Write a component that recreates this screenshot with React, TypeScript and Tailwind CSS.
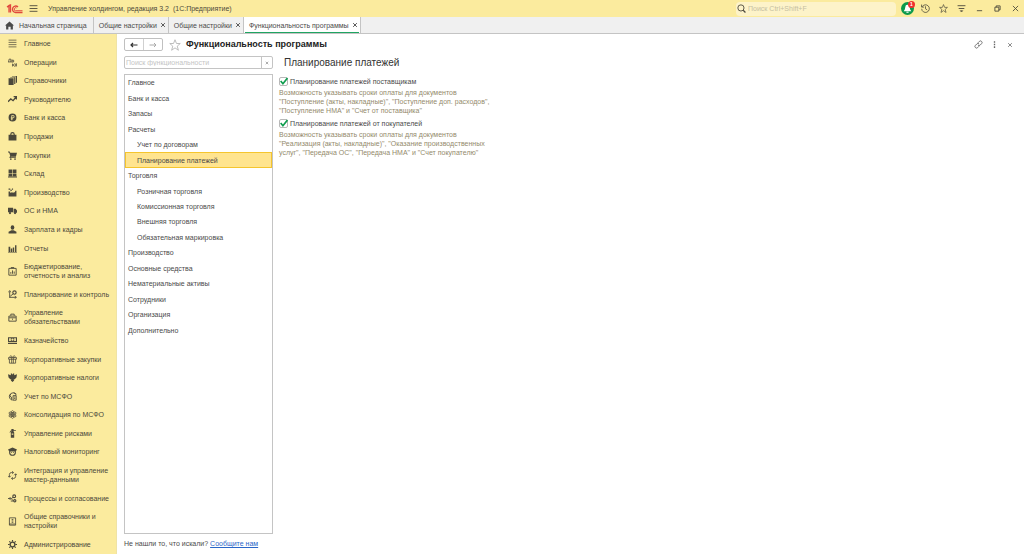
import { useState } from 'react';
import type { ReactNode } from 'react';

interface IconProps {
  className?: string;
  children: ReactNode;
}

// Solid glyph on a 16x16 grid
function Solid({ className = 'size-[9px]', children }: IconProps) {
  return (
    <svg viewBox="0 0 16 16" className={`${className} shrink-0`} fill="currentColor" aria-hidden="true">
      {children}
    </svg>
  );
}

// Outlined glyph on a 16x16 grid
function Line({ className = 'size-[9px]', children }: IconProps) {
  return (
    <svg
      viewBox="0 0 16 16"
      className={`${className} shrink-0`}
      fill="none"
      stroke="currentColor"
      strokeWidth="1.6"
      aria-hidden="true"
    >
      {children}
    </svg>
  );
}

const sections: { label: string; icon: ReactNode }[] = [
  { label: 'Главное', icon: <Line><path d="M1 2h14M1 6h14M1 10h14M1 14h14" strokeWidth="1.3" /></Line> },
  {
    label: 'Операции',
    icon: (
      <Line>
        <path d="M0 7h6M1 7l1-5h3v5M7 3v5M7 4h3v3H7M8 10v5M12 10l-3 2.5 3 2.5M13 15v-4l2-1v5" strokeWidth="1.4" />
      </Line>
    ),
  },
  {
    label: 'Справочники',
    icon: <Solid><path d="M1 4h9v12H1zM4 2h9v12h-2V3H4zM7 0h9v12h-2V1H7z" /></Solid>,
  },
  {
    label: 'Руководителю',
    icon: <Line><path d="M0 12l5-5 4 3 5-6M10 3h5v5" strokeWidth="2.2" /></Line>,
  },
  {
    label: 'Банк и касса',
    icon: (
      <Solid>
        <path fillRule="evenodd" d="M8 1a7 7 0 100 14A7 7 0 008 1zM6 4h3a2.500 2.500 0 010 5.200H7.500V10H9v1.300H7.500V13H6v-1.700H5V10h1V9.200H5V8h1zM7.500 5.300V8H9a1.300 1.300 0 000-2.700z" />
      </Solid>
    ),
  },
  {
    label: 'Продажи',
    icon: (
      <Solid>
        <path fillRule="evenodd" d="M1 5h3V4a4 4 0 018 0v1h3v10H1zM6 5h4V4a2 2 0 00-4 0z" />
      </Solid>
    ),
  },
  {
    label: 'Покупки',
    icon: (
      <Solid>
        <path d="M0 1h3l1 2h12l-2 7H5l-.5 1H14v1.500H3L2.500 11 4 9 2 2.500H0z" />
        <circle cx="5" cy="14.300" r="1.500" />
        <circle cx="12.500" cy="14.300" r="1.500" />
      </Solid>
    ),
  },
  {
    label: 'Склад',
    icon: <Solid><path d="M1 1h6.500v6H1zM8.500 1H15v6H8.500zM1 8h6.500v5H1zM8.500 8H15v5H8.500zM0 13.500h16V15H0z" /></Solid>,
  },
  {
    label: 'Производство',
    icon: <Solid><path d="M1 15V6h3v3l4-2v2l4-2v2l1-4h2v10zM1 1h3v2H1zM4 3h3v2H4zM7 1h2v2H7z" /></Solid>,
  },
  {
    label: 'ОС и НМА',
    icon: (
      <Solid>
        <path d="M0 3h9v8H0zM10 5h3.500L16 8v4h-6z" />
        <circle cx="3.500" cy="12.500" r="2" />
        <circle cx="12.500" cy="12.500" r="2" />
      </Solid>
    ),
  },
  {
    label: 'Зарплата и кадры',
    icon: (
      <Solid>
        <ellipse cx="8" cy="4.500" rx="3.200" ry="4" />
        <path d="M1 15v-3l5-2.500h4L15 12v3z" />
      </Solid>
    ),
  },
  {
    label: 'Отчеты',
    icon: <Solid><path d="M1 5h3v9H1zM5 8h2.500v6H5zM8.500 6H11v8H8.500zM12.500 2H15v12h-2.500zM0 14h16v1H0z" /></Solid>,
  },
  {
    label: 'Бюджетирование, отчетность и анализ',
    icon: <Line><path d="M1.500 2.500h13v12h-13zM5 1h6M5 12V9M8 12V6M11 12V8" /></Line>,
  },
  {
    label: 'Планирование и контроль',
    icon: (
      <Line>
        <path d="M3 14V3M1 4l2-3 2 3M3 13h11M12 11l3 2-3 2M4 11l5-4" />
        <circle cx="11.500" cy="4.500" r="3" strokeWidth="2" />
      </Line>
    ),
  },
  {
    label: 'Управление обязательствами',
    icon: <Line><path d="M1.500 5.500h13v9h-13zM5 5V2h6v3M2 8.500h12M8 10v2" /></Line>,
  },
  {
    label: 'Казначейство',
    icon: (
      <Solid>
        <path fillRule="evenodd" d="M0 2h16v9H0zM2 4v5h3V4zM11 4v5h3V4zM8 4.500a2 2 0 100 4 2 2 0 000-4zM0 12.500h16V14H0z" />
      </Solid>
    ),
  },
  {
    label: 'Корпоративные закупки',
    icon: <Line><path d="M1 4.500h14v3H1zM2.500 7.500v7h11v-7M6.500 4.500v10M9.500 4.500v10M8 4L5 1 3.500 3 5 4.500M8 4l3-3 1.500 2L11 4.500" strokeWidth="1.400" /></Line>,
  },
  {
    label: 'Корпоративные налоги',
    icon: <Solid><path d="M0 2l5 2V1h2l1 2 1-2h2v3l5-2-1 6-3 3-2 .5 1 2-3 2.500-3-2.500 1-2L4 11 1 8z" /></Solid>,
  },
  {
    label: 'Учет по МСФО',
    icon: (
      <Line>
        <path d="M13 3A6.500 6.500 0 108 14.500M5 3.500L3 7l3 2v4" />
        <path d="M9 6.500h5.500v8H9zM11 9h2M11 11.500h2M10 1l4 2v3" />
      </Line>
    ),
  },
  {
    label: 'Консолидация по МСФО',
    icon: (
      <Line>
        <circle cx="8" cy="8" r="1.500" strokeWidth="1.800" />
        <ellipse cx="8" cy="8" rx="3" ry="7" strokeWidth="1.200" />
        <ellipse cx="8" cy="8" rx="3" ry="7" strokeWidth="1.200" transform="rotate(60 8 8)" />
        <ellipse cx="8" cy="8" rx="3" ry="7" strokeWidth="1.200" transform="rotate(120 8 8)" />
      </Line>
    ),
  },
  {
    label: 'Управление рисками',
    icon: <Solid><path d="M6 0h4v2h4v1.500h-4V5l1 1v9.500H5V6l1-1V4L4 6H2.500L5 2.500h1zM6.500 8v2h3V8z" fillRule="evenodd" /></Solid>,
  },
  {
    label: 'Налоговый мониторинг',
    icon: (
      <Solid>
        <path fillRule="evenodd" d="M0 4.500L8 1l8 3.500-2 3v2.500a6 5.500 0 01-12 0V7.500zM4 8v2a4 3.700 0 008 0V8z" />
        <path d="M5.500 9.200h1.700v1.500H5.500zM8.800 9.200h1.700v1.500H8.800z" />
      </Solid>
    ),
  },
  {
    label: 'Интеграция и управление мастер-данными',
    icon: (
      <Line>
        <path d="M9 2.800H6A3.500 3.500 0 002.500 6v5M7 13.200h3a3.500 3.500 0 003.500-3.200V5" strokeWidth="1.500" />
        <path d="M7.500 .5L10 2.800 7.500 5M8.500 11L6 13.200l2.500 2.300M0 8.500L2.500 11 5 8.500M11 7.500L13.500 5 16 7.500" strokeWidth="1.500" />
      </Line>
    ),
  },
  {
    label: 'Процессы и согласование',
    icon: (
      <Line>
        <circle cx="11" cy="4" r="2.500" strokeWidth="2" />
        <circle cx="12" cy="12" r="2" strokeWidth="2" />
        <path d="M0 8h5M3 5.500L5.500 8 3 10.500M6 8l3-2M6 9l4 3M5 12.500h4" />
      </Line>
    ),
  },
  {
    label: 'Общие справочники и настройки',
    icon: <Line><path d="M2.500 1.500h11v13h-11zM2 12.500h11M6.500 4.500h3M6.500 7h3M6.500 9.500h3" strokeWidth="1.500" /></Line>,
  },
  {
    label: 'Администрирование',
    icon: (
      <Line>
        <circle cx="8" cy="8" r="4.200" strokeWidth="2.400" />
        <path d="M8 0v3M8 13v3M0 8h3M13 8h3M2.300 2.300l2 2M11.700 11.700l2 2M2.300 13.700l2-2M11.700 4.300l2-2" strokeWidth="2" />
      </Line>
    ),
  },
];

const groups = [
  { label: 'Главное' },
  { label: 'Банк и касса' },
  { label: 'Запасы' },
  { label: 'Расчеты' },
  { label: 'Учет по договорам', nested: true },
  { label: 'Планирование платежей', nested: true },
  { label: 'Торговля' },
  { label: 'Розничная торговля', nested: true },
  { label: 'Комиссионная торговля', nested: true },
  { label: 'Внешняя торговля', nested: true },
  { label: 'Обязательная маркировка', nested: true },
  { label: 'Производство' },
  { label: 'Основные средства' },
  { label: 'Нематериальные активы' },
  { label: 'Сотрудники' },
  { label: 'Организация' },
  { label: 'Дополнительно' },
];

const options = [
  {
    id: 'suppliers',
    label: 'Планирование платежей поставщикам',
    hint: [
      'Возможность указывать сроки оплаты для документов',
      '"Поступление (акты, накладные)", "Поступление доп. расходов",',
      '"Поступление НМА" и "Счет от поставщика"',
    ],
  },
  {
    id: 'customers',
    label: 'Планирование платежей от покупателей',
    hint: [
      'Возможность указывать сроки оплаты для документов',
      '"Реализация (акты, накладные)", "Оказание производственных',
      'услуг", "Передача ОС", "Передача НМА" и "Счет покупателю"',
    ],
  },
];

const tabs = ['Общие настройки', 'Общие настройки', 'Функциональность программы'];

function Cross({ className }: { className?: string }) {
  return <Line className={className}><path d="M3 3l10 10M13 3L3 13" strokeWidth="2.400" /></Line>;
}

function Star({ className }: { className?: string }) {
  return (
    <Line className={className}>
      <path d="M8 1l2 5h5l-4 3.500 1.500 5.500L8 11.800 3.500 15 5 9.500 1 6h5z" strokeWidth="1.200" />
    </Line>
  );
}

function TitleBar() {
  return (
    <header className="flex h-[17px] items-center bg-[#fbeb9e] pl-[6px] text-[#4d4a3c]">
      <svg viewBox="0 0 34 20" className="h-[10px] w-[17px] shrink-0" fill="none" stroke="#e0473c" strokeWidth="2.600" aria-label="1С">
        <path d="M2 6l4-3v14M9 17V2L3 6" />
        <path d="M24 6a6.500 6.500 0 10-5 11h14" />
        <path d="M21 8a3 3 0 10-2 5.500h14" strokeWidth="2" />
      </svg>
      <button aria-label="Меню" className="ml-[6px]">
        <Line className="size-[9px]"><path d="M1 3h14M1 8h14M1 13h14" /></Line>
      </button>
      <h1 className="ml-[10px] whitespace-pre text-[7px]">Управление холдингом, редакция 3.2  (1С:Предприятие)</h1>
      <label className="ml-auto flex h-[14px] w-[160px] items-center rounded-sm bg-[#fdf3c9] pl-px">
        <Line className="size-[9px]">
          <circle cx="7" cy="7" r="5.500" />
          <path d="M11 11l4 4" strokeWidth="2.200" />
        </Line>
        <input
          aria-label="Поиск"
          placeholder="Поиск Ctrl+Shift+F"
          className="ml-[2px] min-w-0 flex-1 bg-transparent text-[7px] outline-none placeholder:text-[#c6bfa2]"
        />
      </label>
      <div className="ml-[2px] grid grid-cols-7 justify-items-center">
        <button aria-label="Уведомления" className="relative flex h-[17px] w-[18px] items-center justify-center">
          <svg viewBox="0 0 24 24" className="size-[13px]" aria-hidden="true">
            <circle cx="12" cy="12" r="12" fill="#0b9a4b" />
            <path d="M5 17l2-3 1-5a4 4 0 018 0l1 5 2 3zM10 18h4v2h-4z" fill="#fff" />
          </svg>
          <span className="absolute top-px right-px flex size-[7px] items-center justify-center rounded-full bg-[#f0302c] text-[5px] leading-none font-bold text-white">
            1
          </span>
        </button>
        <button aria-label="История" className="flex h-[17px] w-[18px] items-center justify-center">
          <Line className="size-[9px]"><path d="M2 5a6.800 6.800 0 11-.8 3.500M1 1v4.500h4.500M8 4v4.500l3 2" strokeWidth="1.400" /></Line>
        </button>
        <button aria-label="Избранное" className="flex h-[17px] w-[18px] items-center justify-center">
          <Star className="size-[9px]" />
        </button>
        <button aria-label="Настройки" className="flex h-[17px] w-[18px] items-center justify-center">
          <Line className="size-[9px]"><path d="M1 3h14M3 8h10M6 12h4l-2 2z" /></Line>
        </button>
        <button aria-label="Свернуть" className="flex h-[17px] w-[18px] items-center justify-center">
          <Line className="size-[7px]"><path d="M2 13h12" strokeWidth="2" /></Line>
        </button>
        <button aria-label="Восстановить" className="flex h-[17px] w-[18px] items-center justify-center">
          <Line className="size-[7px]"><path d="M2 5h9v9H2zM5 5V2h9v9h-3" strokeWidth="2" /></Line>
        </button>
        <button aria-label="Закрыть" className="flex h-[17px] w-[18px] items-center justify-center">
          <Line className="size-[7px]"><path d="M2 2l12 12M14 2L2 14" strokeWidth="2" /></Line>
        </button>
      </div>
    </header>
  );
}

function TabBar() {
  return (
    <nav className="flex h-[17px] border-b border-[#c4c4c4] bg-[#f0f0f0] text-[7px] text-[#4a4a4a]">
      <button className="flex items-center gap-[5px] border-r border-[#c4c4c4] pr-[6px] pl-[5px]">
        <Solid className="size-[9px]"><path d="M8 1l8 7h-2v7h-4v-5H6v5H2V8H0z" /></Solid>
        Начальная страница
      </button>
      {tabs.map((tab, i) => {
        const active = i === tabs.length - 1;
        return (
          <div key={i} className={`flex border-r border-[#c4c4c4] px-px ${active ? 'bg-white' : ''}`}>
            <div className={`flex items-center gap-[3px] border-y border-t-transparent pr-px pl-[4px] ${active ? 'border-b-[#1fa562]' : 'border-b-transparent'}`}>
              <button>{tab}</button>
              <button aria-label={`Закрыть ${tab}`}>
                <Cross className="size-[6px]" />
              </button>
            </div>
          </div>
        );
      })}
    </nav>
  );
}

function Sidebar() {
  return (
    <aside className="w-[117px] shrink-0 border-r border-[#efe3a6] bg-[#fbeb9e] text-[#4b483b]">
      <ul className="flex h-full flex-col justify-between py-[5px] pl-[8px]">
        {sections.map(({ label, icon }) => (
          <li key={label}>
            <button className="flex w-full items-center gap-[7px] text-left text-[7px] leading-[9px]">
              {icon}
              <span className="max-w-[86px]">{label}</span>
            </button>
          </li>
        ))}
      </ul>
    </aside>
  );
}

export default function App() {
  const [selected, setSelected] = useState('Планирование платежей');
  const [enabled, setEnabled] = useState<Record<string, boolean>>({ suppliers: true, customers: true });

  return (
    <div className="flex min-h-screen flex-col bg-white font-['Liberation_Sans',Arial,sans-serif] text-[7px] leading-[9px] text-[#4a4a4a]">
      <TitleBar />
      <TabBar />
      <div className="flex flex-1">
        <Sidebar />
        <main className="flex flex-1 flex-col pt-[4px] pr-[6px] pb-[6px] pl-[7px]">
          {/* Form header */}
          <div className="flex h-[13px] items-center">
            <div className="flex h-[13px] w-[39px] divide-x divide-[#d0d0d0] rounded-xs border border-[#c0c0c0]">
              <button aria-label="Назад" className="flex flex-1 items-center justify-center text-[#333]">
                <Line className="size-[8px]"><path d="M15 8H2M6 4L2 8l4 4" strokeWidth="2.400" /></Line>
              </button>
              <button aria-label="Вперед" className="flex flex-1 items-center justify-center text-[#aaa]">
                <Line className="size-[8px]"><path d="M1 8h13M10 4l4 4-4 4" strokeWidth="2" /></Line>
              </button>
            </div>
            <button aria-label="В избранное" className="ml-[6px] text-[#b5b5b5]">
              <Star className="size-[12px]" />
            </button>
            <h2 className="ml-[5px] text-[9px] font-bold text-[#222]">Функциональность программы</h2>
            <div className="ml-auto flex text-[#666]">
              <button aria-label="Ссылка" className="flex w-[16px] justify-center">
                <Line className="size-[9px]">
                  <path d="M7 5l2.500-2.500a2.800 2.800 0 014 4L11 9a2.800 2.800 0 01-4 0M9 11l-2.500 2.500a2.800 2.800 0 01-4-4L5 7a2.800 2.800 0 014 0" />
                </Line>
              </button>
              <button aria-label="Еще" className="flex w-[16px] justify-center">
                <Solid className="size-[9px]"><path d="M6.800 2h2.400v3H6.800zM6.800 6.500h2.400v3H6.800zM6.800 11h2.400v3H6.800z" /></Solid>
              </button>
              <button aria-label="Закрыть форму" className="flex w-[16px] items-center justify-center">
                <Line className="size-[6px]"><path d="M3 3l10 10M13 3L3 13" strokeWidth="2" /></Line>
              </button>
            </div>
          </div>

          <div className="mt-[5px] flex flex-1 gap-[6px]">
            {/* Search and tree of sections */}
            <div className="flex w-[149px] shrink-0 flex-col">
              <div className="flex h-[13px] rounded-xs border border-[#c4c4c4]">
                <input
                  aria-label="Поиск функциональности"
                  placeholder="Поиск функциональности"
                  className="min-w-0 flex-1 pl-px text-[7px] outline-none placeholder:text-[#c4c4c4]"
                />
                <button aria-label="Очистить" className="flex w-[11px] items-center justify-center border-l border-[#c4c4c4] text-[#777]">
                  <Cross className="size-[4px]" />
                </button>
              </div>
              <div className="mt-[5px] flex-1 border border-[#c4c4c4]">
                <ul className="grid h-[263px] auto-rows-fr">
                  {groups.map(({ label, nested }) => (
                    <li key={label} className="flex">
                      <button
                        onClick={() => setSelected(label)}
                        className={`w-full border text-left ${nested ? 'pl-[11px]' : 'pl-[2px]'} ${
                          label === selected ? 'border-[#f5c52e] bg-[#ffe48f]' : 'border-transparent'
                        }`}
                      >
                        {label}
                      </button>
                    </li>
                  ))}
                </ul>
              </div>
              <p className="mt-[5px]">
                Не нашли то, что искали?{' '}
                <a href="#feedback" className="text-[#2a66c8] underline">
                  Сообщите нам
                </a>
              </p>
            </div>

            {/* Options of the selected section */}
            <section>
              <h3 className="pl-[5px] text-[10px] leading-[13px] text-[#333]">Планирование платежей</h3>
              <div className="mt-[7px] flex flex-col gap-[3px]">
                {options.map(({ id, label, hint }) => (
                  <div key={id}>
                    <label className="flex h-[10px] items-center gap-[2px]">
                      <span className="relative flex">
                        <input
                          type="checkbox"
                          checked={enabled[id]}
                          onChange={() => setEnabled({ ...enabled, [id]: !enabled[id] })}
                          className="peer size-[9px] appearance-none rounded-xs border border-[#b8b8b8] bg-white"
                        />
                        <svg
                          viewBox="0 0 16 16"
                          className="pointer-events-none absolute inset-0 hidden size-[9px] peer-checked:block"
                          fill="none"
                          stroke="#0f9d4f"
                          strokeWidth="3"
                          aria-hidden="true"
                        >
                          <path d="M3 7l4 5 8-10" />
                        </svg>
                      </span>
                      {label}
                    </label>
                    <p className="mt-[2px] text-[#948a6c]">
                      {hint.map((line) => (
                        <span key={line} className="block">{line}</span>
                      ))}
                    </p>
                  </div>
                ))}
              </div>
            </section>
          </div>
        </main>
      </div>
    </div>
  );
}
